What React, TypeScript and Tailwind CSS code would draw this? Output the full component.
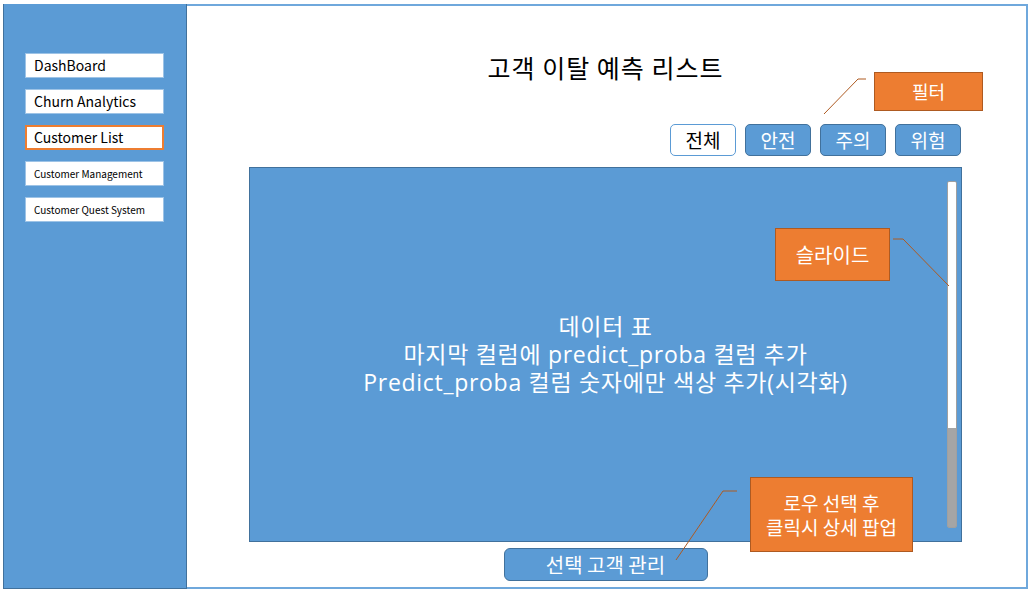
import React from "react";

const font = { fontFamily: '"Noto Sans CJK KR", "Noto Sans", sans-serif' };
const wideFont = { fontFamily: '"Open Sans", "Noto Sans CJK KR", sans-serif' };

function NavItem({ label, small, active }: { label: string; small?: boolean; active?: boolean }) {
  return (
    <div
      className={`h-[25px] w-[139px] bg-white flex items-center text-black ${
        active ? "border-2 border-[#ed7d31] pl-[7px]" : "border border-[#9dc3e6] pl-[8px]"
      } ${small ? "text-[10px]" : "text-[14px]"}`}
    >
      {label}
    </div>
  );
}

function FilterBtn({ label, selected }: { label: string; selected?: boolean }) {
  return (
    <div
      className={`h-[32px] w-[66px] rounded-[5px] flex items-center justify-center text-[19px] ${
        selected
          ? "bg-white border border-[#5b9bd5] text-black"
          : "bg-[#5b9bd5] border border-[#41719c] text-white"
      }`}
    >
      {label}
    </div>
  );
}

export default function App() {
  return (
    <div className="w-[1032px] h-[597px] bg-white relative overflow-hidden" style={font}>
      <div className="ml-[3px] mt-[4px] w-[1025px] h-[585px] flex border-2 border-l-0 border-[#6fa8dc]">
        <aside className="w-[184px] bg-[#5b9bd5] border-l border-b border-r border-[#41719c] -mt-[2px] -mb-[2px] h-[585px] flex flex-col gap-[11px] pt-[49px] pl-[21px]">
          <NavItem label="DashBoard" />
          <NavItem label="Churn Analytics" />
          <NavItem label="Customer List" active />
          <NavItem label="Customer Management" small />
          <NavItem label="Customer Quest System" small />
        </aside>
        <main className="flex-1 flex flex-col pl-[62px] pr-[64px] pt-[43px]">
          <h1 className="text-center text-[25px] leading-[36px] text-black tracking-[1px]">고객 이탈 예측 리스트</h1>
          <div className="flex justify-end gap-[9px] mt-[39px] mr-[1px]">
            <FilterBtn label="전체" selected />
            <FilterBtn label="안전" />
            <FilterBtn label="주의" />
            <FilterBtn label="위험" />
          </div>
          <div className="mt-[11px] h-[375px] bg-[#5b9bd5] border border-[#41719c] flex items-center justify-center relative">
            <div className="text-white text-[23px] leading-[28px] tracking-[0.7px] text-center pt-[0px] pb-[2px]" style={wideFont}>
              <div>데이터 표</div>
              <div>마지막 컬럼에 predict_proba 컬럼 추가</div>
              <div>Predict_proba 컬럼 숫자에만 색상 추가(시각화)</div>
            </div>
            <div className="absolute right-[4px] top-[13px] w-[10px] h-[347px] border border-[#a0a0a0] rounded-[2px] flex flex-col overflow-hidden">
              <div className="h-[246px] bg-white" />
              <div className="flex-1 bg-[#a5a5a5]" />
            </div>
          </div>
          <div className="flex justify-center mt-[6px]">
            <div className="w-[204px] h-[33px] rounded-[6px] bg-[#5b9bd5] border border-[#41719c] text-white text-[20px] flex items-center justify-center">
              선택 고객 관리
            </div>
          </div>
        </main>
      </div>

      <svg className="absolute inset-0 pointer-events-none" width="1032" height="597">
        <polyline points="824,114 858,79 866,79" fill="none" stroke="#ae5a21" strokeWidth="1" />
        <polyline points="893,239 903,239 949,286" fill="none" stroke="#ae5a21" strokeWidth="1" />
        <polyline points="737,491 723,491 676,560" fill="none" stroke="#ae5a21" strokeWidth="1" />
      </svg>

      <div className="absolute left-[874px] top-[72px] w-[109px] h-[39px] bg-[#ed7d31] border border-[#ae5a21] text-white text-[18px] flex items-center justify-center">
        필터
      </div>
      <div className="absolute left-[775px] top-[228px] w-[115px] h-[53px] bg-[#ed7d31] border border-[#ae5a21] text-white text-[20px] flex items-center justify-center">
        슬라이드
      </div>
      <div className="absolute left-[750px] top-[477px] w-[163px] h-[75px] bg-[#ed7d31] border border-[#ae5a21] text-white text-[19px] leading-[24px] flex flex-col items-center justify-center">
        <div>로우 선택 후</div>
        <div>클릭시 상세 팝업</div>
      </div>
    </div>
  );
}
